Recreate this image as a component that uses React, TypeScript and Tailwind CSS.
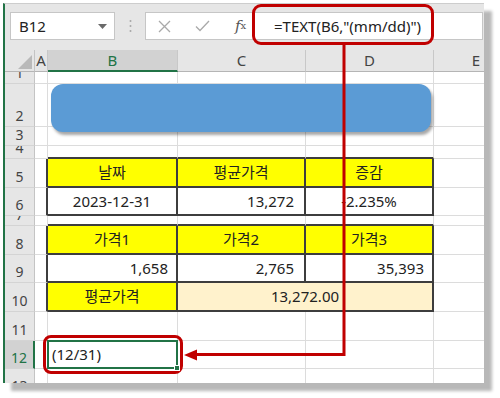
import React from "react";

const GR = "border-r border-r-[#dcdcdc]";
const DR = "border-r-2 border-r-[#3d3d3d]";
const GB = "border-b border-b-[#dcdcdc]";
const DB = "border-b-2 border-b-[#3d3d3d]";

type Spec = {
  w: string;
  r?: string;
  b?: string;
  bg?: string;
  text?: string;
  align?: "c" | "r" | "l";
  pad?: string;
  sel?: boolean;
};

type RowSpec = { n: number; h: string; cells: Spec[]; sel?: boolean };

const A = "w-[13px]";
const B = "w-[130px]";
const C = "w-[128px]";
const D = "w-[128px]";
const E = "w-[50px]";
const CD = "w-[256px]";
const YEL = "bg-[#ffff00]";
const PEACH = "bg-[#fff2cc]";

const plain = (): Spec[] => [{ w: A }, { w: B }, { w: C }, { w: D }, { w: E, r: "" }];

const rows: RowSpec[] = [
  { n: 1, h: "h-[12px]", cells: plain() },
  { n: 2, h: "h-[43px]", cells: plain() },
  { n: 3, h: "h-[19px]", cells: plain() },
  {
    n: 4,
    h: "h-[13px]",
    cells: [{ w: A }, { w: B, b: DB }, { w: C, b: DB }, { w: D, b: DB }, { w: E, r: "" }],
  },
  {
    n: 5,
    h: "h-[29px]",
    cells: [
      { w: A, r: DR },
      { w: B, r: DR, b: DB, bg: YEL, text: "날짜", align: "c" },
      { w: C, r: DR, b: DB, bg: YEL, text: "평균가격", align: "c" },
      { w: D, r: DR, b: DB, bg: YEL, text: "증감", align: "c" },
      { w: E, r: "" },
    ],
  },
  {
    n: 6,
    h: "h-[28px]",
    cells: [
      { w: A, r: DR },
      { w: B, r: DR, b: DB, text: "2023-12-31", align: "c" },
      { w: C, r: DR, b: DB, text: "13,272", align: "r", pad: "pr-[10px]" },
      { w: D, r: DR, b: DB, text: "-2.235%", align: "c" },
      { w: E, r: "" },
    ],
  },
  {
    n: 7,
    h: "h-[10px]",
    cells: [{ w: A }, { w: B, b: DB }, { w: C, b: DB }, { w: D, b: DB }, { w: E, r: "" }],
  },
  {
    n: 8,
    h: "h-[29px]",
    cells: [
      { w: A, r: DR },
      { w: B, r: DR, b: DB, bg: YEL, text: "가격1", align: "c" },
      { w: C, r: DR, b: DB, bg: YEL, text: "가격2", align: "c" },
      { w: D, r: DR, b: DB, bg: YEL, text: "가격3", align: "c" },
      { w: E, r: "" },
    ],
  },
  {
    n: 9,
    h: "h-[28px]",
    cells: [
      { w: A, r: DR },
      { w: B, r: DR, b: DB, text: "1,658", align: "r", pad: "pr-[8px]" },
      { w: C, r: DR, b: DB, text: "2,765", align: "r", pad: "pr-[10px]" },
      { w: D, r: DR, b: DB, text: "35,393", align: "r", pad: "pr-[8px]" },
      { w: E, r: "" },
    ],
  },
  {
    n: 10,
    h: "h-[29px]",
    cells: [
      { w: A, r: DR },
      { w: B, r: DR, b: DB, bg: YEL, text: "평균가격", align: "c" },
      { w: CD, r: DR, b: DB, bg: PEACH, text: "13,272.00", align: "c" },
      { w: E, r: "" },
    ],
  },
  { n: 11, h: "h-[29px]", cells: plain() },
  {
    n: 12,
    h: "h-[28px]",
    sel: true,
    cells: [
      { w: A },
      { w: B, text: "(12/31)", align: "l", pad: "pl-[4px]", sel: true },
      { w: C },
      { w: D },
      { w: E, r: "" },
    ],
  },
  { n: 13, h: "h-[28px]", cells: plain() },
];

function Cell({ s }: { s: Spec }) {
  const justify =
    s.align === "r" ? "justify-end" : s.align === "l" ? "justify-start" : "justify-center";
  return (
    <div
      className={`relative flex items-center shrink-0 h-full ${s.w} ${s.r ?? GR} ${s.b ?? GB} ${
        s.bg ?? "bg-white"
      } ${justify} ${s.pad ?? ""}`}
    >
      {s.text && <span className="whitespace-nowrap">{s.text}</span>}
      {s.sel && (
        <div className="absolute z-10 left-[-1px] top-[-1px] right-[-1px] bottom-[-1px] border-2 border-[#217346]">
          <div className="absolute right-[-4px] bottom-[-4px] w-[6px] h-[6px] bg-[#217346] border border-white" />
        </div>
      )}
    </div>
  );
}

function RowHeader({ n, sel }: { n: number; sel?: boolean }) {
  return (
    <div
      className={`w-[30px] shrink-0 h-full flex items-end justify-center pb-[3px] overflow-hidden text-[14px] leading-none border-b border-b-[#d4d4d4] ${
        sel
          ? "bg-[#d2d2d2] text-[#217346] border-r-2 border-r-[#217346]"
          : "bg-[#e6e6e6] text-[#444444] border-r border-r-[#c4c4c4]"
      }`}
    >
      {n}
    </div>
  );
}

export default function App() {
  return (
    <div className="relative w-[500px] h-[398px] bg-white overflow-hidden font-['Noto_Sans','Noto_Sans_CJK_KR',sans-serif] text-[15px] text-[#222222]">
      <div className="ml-[3px] mt-[3px] w-[481px] h-[380px] border-l-2 border-l-[#217346] border-t border-t-[#cdcdcd] bg-[#e6e6e6] shadow-[8px_8px_3px_rgba(0,0,0,0.28)] flex flex-col overflow-hidden">
        {/* formula bar area */}
        <div className="h-[46px] shrink-0 flex items-start pt-[8px]">
          <div className="ml-[5px] w-[105px] h-[28px] bg-white border border-[#c6c6c6] flex items-center justify-between pl-[8px] pr-[7px]">
            <span className="text-[15px] text-[#222]">B12</span>
            <svg width="9" height="5" viewBox="0 0 9 5">
              <polygon points="0,0 9,0 4.5,5" fill="#6a6a6a" />
            </svg>
          </div>
          <div className="w-[30px] h-[28px] flex items-center justify-center">
            <svg width="3" height="14" viewBox="0 0 3 14">
              <circle cx="1.5" cy="2" r="1" fill="#a8a8a8" />
              <circle cx="1.5" cy="7" r="1" fill="#a8a8a8" />
              <circle cx="1.5" cy="12" r="1" fill="#a8a8a8" />
            </svg>
          </div>
          <div className="w-[338px] h-[28px] bg-white border border-[#c6c6c6] flex items-center">
            <div className="ml-[11px] w-[14px] h-[14px] flex items-center justify-center">
              <svg width="13" height="13" viewBox="0 0 13 13">
                <path d="M1 1 L12 12 M12 1 L1 12" stroke="#a9a9a9" strokeWidth="1.3" fill="none" />
              </svg>
            </div>
            <div className="ml-[24px] w-[15px] h-[14px] flex items-center justify-center">
              <svg width="15" height="12" viewBox="0 0 15 12">
                <path d="M1 6.5 L5 10.5 L14 1" stroke="#a9a9a9" strokeWidth="1.3" fill="none" />
              </svg>
            </div>
            <div className="ml-[22px] w-[17px] flex items-center justify-center font-['DejaVu_Serif',serif] italic text-[15px] text-[#555] leading-none">
              f<span className="text-[10px] not-italic font-['DejaVu_Serif',serif] italic">x</span>
            </div>
            <div className="ml-[25px] text-[15px] text-[#222] whitespace-nowrap">
              {'=TEXT(B6,"(mm/dd)")'}
            </div>
          </div>
        </div>

        {/* column headers */}
        <div className="h-[22px] shrink-0 flex">
          <div className="w-[30px] shrink-0 h-full bg-[#e6e6e6] border-r border-r-[#c4c4c4] border-b border-b-[#b5b5b5] flex items-end justify-end pr-[2px] pb-[2px]">
            <svg width="14" height="14" viewBox="0 0 14 14">
              <polygon points="14,0 14,14 0,14" fill="#b9b9b9" />
            </svg>
          </div>
          <div className="w-[13px] shrink-0 h-full bg-[#e6e6e6] border-r border-r-[#c8c8c8] border-b border-b-[#b5b5b5] flex items-center justify-center text-[#444]">
            A
          </div>
          <div className="w-[130px] shrink-0 h-full bg-[#d2d2d2] border-r border-r-[#c8c8c8] border-b-2 border-b-[#217346] flex items-center justify-center text-[#217346]">
            B
          </div>
          <div className="w-[128px] shrink-0 h-full bg-[#e6e6e6] border-r border-r-[#c8c8c8] border-b border-b-[#b5b5b5] flex items-center justify-center text-[#444]">
            C
          </div>
          <div className="w-[128px] shrink-0 h-full bg-[#e6e6e6] border-r border-r-[#c8c8c8] border-b border-b-[#b5b5b5] flex items-center justify-center text-[#444]">
            D
          </div>
          <div className="w-[50px] shrink-0 h-full bg-[#e6e6e6] border-b border-b-[#b5b5b5] flex items-center justify-end pr-[4px] text-[#444]">
            E
          </div>
        </div>

        {/* rows */}
        {rows.map((r) => (
          <div key={r.n} className={`flex shrink-0 ${r.h}`}>
            <RowHeader n={r.n} sel={r.sel} />
            {r.cells.map((s, i) => (
              <Cell key={i} s={s} />
            ))}
          </div>
        ))}
      </div>

      {/* floating shape */}
      <div className="absolute left-[51px] top-[84px] w-[380px] h-[48px] rounded-[12px] bg-[#5b9bd5] shadow-[2px_3px_3px_rgba(0,0,0,0.35)]" />

      {/* annotations */}
      <div className="absolute left-[252px] top-[4px] w-[182px] h-[41px] border-[3px] border-[#c00000] rounded-[9px]" />
      <div className="absolute left-[43px] top-[335px] w-[140px] h-[39px] border-[3px] border-[#c00000] rounded-[8px]" />
      <svg className="absolute left-0 top-0 pointer-events-none" width="500" height="398" viewBox="0 0 500 398">
        <polyline points="344,45 344,354.5 196,354.5" stroke="#c00000" strokeWidth="3" fill="none" />
        <polygon points="184,355 197,349.5 197,360.5" fill="#c00000" />
      </svg>
    </div>
  );
}
